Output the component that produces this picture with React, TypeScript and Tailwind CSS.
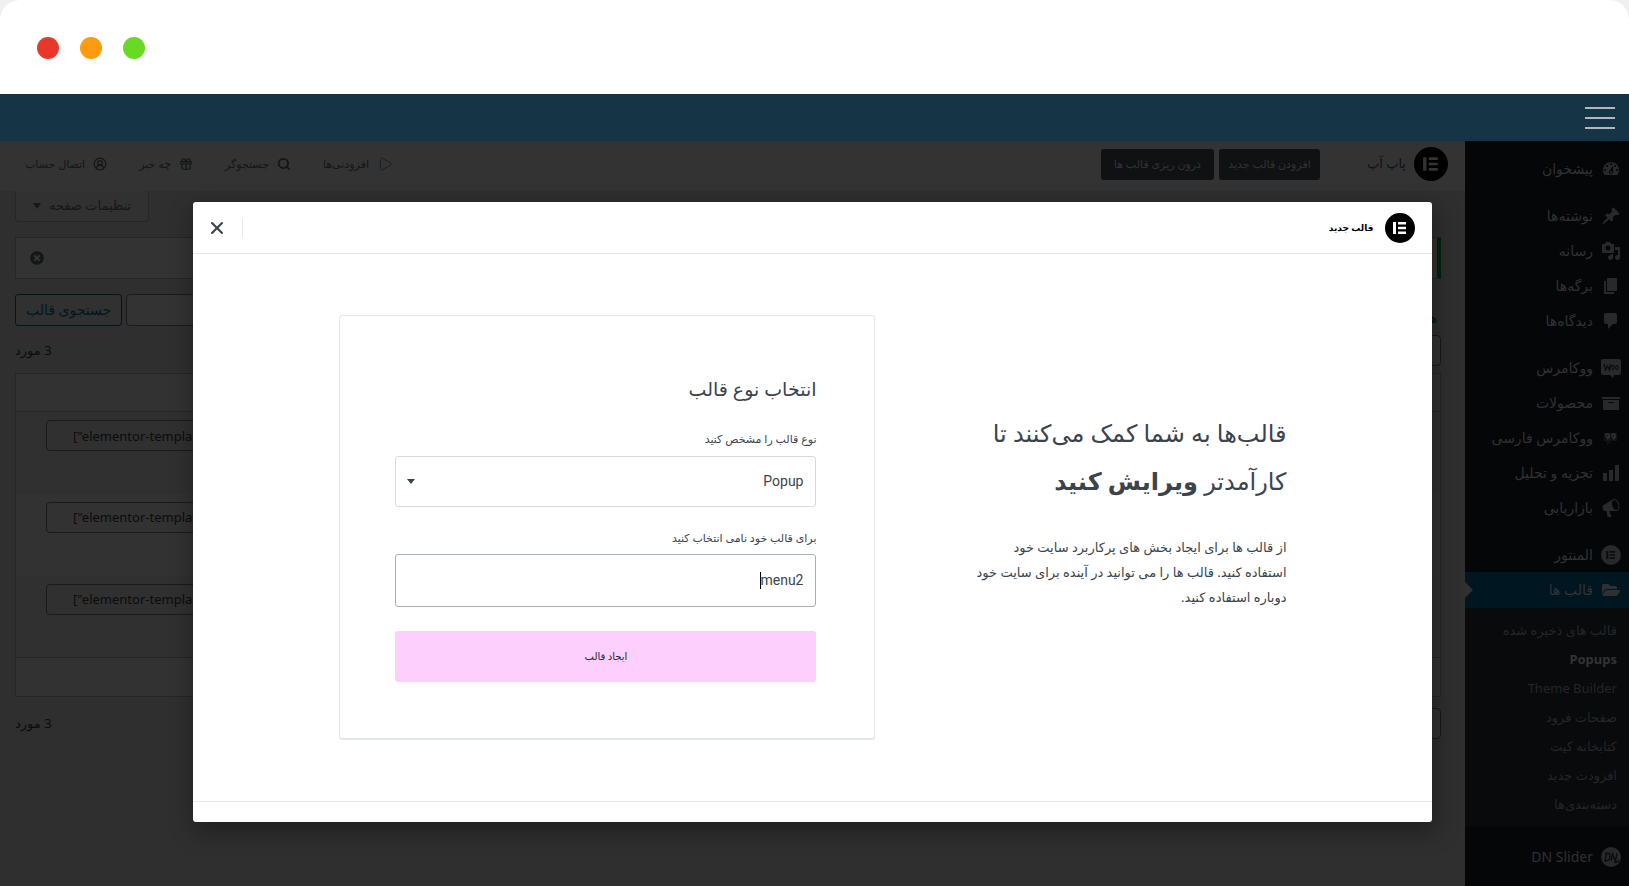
import { useState, type ReactNode } from 'react';
import { FaFolderOpen, FaTimesCircle } from 'react-icons/fa';
import { CircleUserRound, Gift, Search, Play, X } from 'lucide-react';

const ICONS = {
  dashboard:
    'M3.76 16h12.48c1.1-1.37 1.76-3.11 1.76-5 0-4.42-3.58-8-8-8s-8 3.58-8 8c0 1.89.66 3.63 1.76 5zM10 4c.55 0 1 .45 1 1s-.45 1-1 1-1-.45-1-1 .45-1 1-1zM6 6c.55 0 1 .45 1 1s-.45 1-1 1-1-.45-1-1 .45-1 1-1zm8 0c.55 0 1 .45 1 1s-.45 1-1 1-1-.45-1-1 .45-1 1-1zm-5.37 5.55L12 7v6c0 1.1-.9 2-2 2s-2-.9-2-2c0-.57.24-1.08.63-1.45zM4 10c.55 0 1 .45 1 1s-.45 1-1 1-1-.45-1-1 .45-1 1-1zm12 0c.55 0 1 .45 1 1s-.45 1-1 1-1-.45-1-1 .45-1 1-1zm-5 3c0-.55-.45-1-1-1s-1 .45-1 1 .45 1 1 1 1-.45 1-1z',
  post: 'M10.44 3.02l1.82-1.82 6.36 6.35-1.83 1.82c-1.05-.68-2.48-.57-3.41.36l-.75.75c-.92.93-1.04 2.35-.35 3.41l-1.83 1.82-2.41-2.41-2.8 2.79c-.42.42-3.38 2.71-3.8 2.29s1.86-3.39 2.28-3.81l2.79-2.79L4.1 9.36l1.83-1.82c1.05.69 2.48.57 3.4-.36l.75-.75c.93-.92 1.05-2.35.36-3.41z',
  media:
    'M13 11V4c0-.55-.45-1-1-1h-1.67L9 1H5L3.67 3H2c-.55 0-1 .45-1 1v7c0 .55.45 1 1 1h10c.55 0 1-.45 1-1zM7 4.5c1.38 0 2.5 1.12 2.5 2.5S8.38 9.5 7 9.5 4.5 8.38 4.5 7 5.62 4.5 7 4.5zM14 6h5v10.5c0 1.38-1.12 2.5-2.5 2.5S14 17.88 14 16.5s1.12-2.5 2.5-2.5c.17 0 .34.02.5.05V9h-3V6zm-4 8.05V13h2v3.5c0 1.38-1.12 2.5-2.5 2.5S7 17.88 7 16.5 8.12 14 9.5 14c.17 0 .34.02.5.05z',
  page: 'M6 15V2h10v13H6zm-1 1h8v2H3V5h2v11z',
  comments:
    'M5 2h9q.82 0 1.41.59T16 4v7q0 .82-.59 1.41T14 13h-2l-5 5v-5H5q-.82 0-1.41-.59T3 11V4q0-.82.59-1.41T5 2z',
  archive: 'M19 4v2H1V4h18zM2 7h16v10H2V7zm11 3V9H7v1h6z',
  chart: 'M18 18V2h-4v16h4zm-6 0V7H8v11h4zm-6 0v-8H2v8h4z',
  megaphone:
    'M18.15 5.94c.46 1.62.38 3.22-.02 4.48-.42 1.28-1.26 2.18-2.3 2.48-.16.06-.26.06-.4.06-.06.02-.12.02-.18.02-.06.02-.14.02-.22.02h-6.8l2.22 5.5c.02.14-.06.26-.14.34-.08.1-.24.16-.34.16H6.95c-.1 0-.26-.06-.34-.16-.08-.08-.16-.2-.14-.34l-1-5.5H4.25l-.02-.02c-.5.06-1.08-.18-1.54-.62s-.88-1.08-1.06-1.88c-.24-.8-.2-1.56-.02-2.2.18-.62.58-1.08 1.06-1.3l.02-.02 9-5.4c.1-.06.18-.1.24-.16.06-.04.14-.08.24-.12.16-.08.28-.12.5-.18 1.04-.3 2.24.1 3.22.98s1.84 2.24 2.26 3.86zm-2.58 5.98h-.02c.4-.1.74-.34 1.04-.7.58-.7.86-1.76.86-3.04 0-.64-.1-1.3-.28-1.98-.34-1.36-1.02-2.5-1.78-3.24s-1.68-1.1-2.46-.88c-.82.22-1.4.96-1.7 2-.32 1.04-.28 2.36.06 3.72.38 1.36 1 2.5 1.8 3.24.78.74 1.62 1.1 2.48.88z',
};

function DashIcon({ name }: { name: keyof typeof ICONS }) {
  return (
    <svg className="w-5 h-5" viewBox="0 0 20 20" fill="currentColor" fillRule="evenodd">
      <path d={ICONS[name]} />
    </svg>
  );
}

function ElementorLogo({ className, fg, bg }: { className: string; fg: string; bg: string }) {
  return (
    <svg className={className} viewBox="0 0 30 30">
      <circle cx="15" cy="15" r="15" fill={bg} />
      <path d="M8 9h3v12H8zM13 9h8v2.5h-8zM13 13.8h8v2.4h-8zM13 18.5h8V21h-8z" fill={fg} />
    </svg>
  );
}

function WooIcon() {
  return (
    <svg className="w-5 h-5" viewBox="0 0 20 20" fill="none">
      <path d="M2 1h16a2 2 0 0 1 2 2v12a2 2 0 0 1-2 2h-5l-1 3-3-3H2a2 2 0 0 1-2-2V3a2 2 0 0 1 2-2z" fill="#28292a" />
      <path d="M3 6l1.500 6L6.500 8l2 4L9.500 6" stroke="#0a0b0c" strokeWidth="1.300" />
      <ellipse cx="12" cy="9.500" rx="1.300" ry="2.200" stroke="#0a0b0c" />
      <ellipse cx="16" cy="9.500" rx="1.300" ry="2.200" stroke="#0a0b0c" />
    </svg>
  );
}

function QuoteIcon() {
  return (
    <svg className="w-5 h-5" viewBox="0 0 20 20" fill="none">
      <path d="M3 5h13v8h-6l-4 4v-4H3z" fill="#121314" />
      <g stroke="#303132" strokeWidth="1.400">
        <circle cx="6.500" cy="7.500" r="1.700" />
        <circle cx="12.500" cy="7.500" r="1.700" />
        <path d="M8.200 7.500c0 2-.7 3.200-2.200 3.700M14.200 7.500c0 2-.7 3.200-2.200 3.700" />
      </g>
    </svg>
  );
}

function SliderIcon() {
  return (
    <svg className="w-5 h-5" viewBox="0 0 20 20" fill="none">
      <circle cx="10" cy="10" r="10" fill="#28292a" />
      <path d="M5.500 6L4 14c3 0 5-2 5-5s-2-3-5-2.500M10 14l1.500-7 3 7L16 6.500M13 15c2 1 4 0 5-2" stroke="#0a0b0c" strokeWidth="1.300" />
    </svg>
  );
}

type MenuItem = { label: string; icon: ReactNode };

const MENU_GROUPS: MenuItem[][] = [
  [{ label: 'پیشخوان', icon: <DashIcon name="dashboard" /> }],
  [
    { label: 'نوشته‌ها', icon: <DashIcon name="post" /> },
    { label: 'رسانه', icon: <DashIcon name="media" /> },
    { label: 'برگه‌ها', icon: <DashIcon name="page" /> },
    { label: 'دیدگاه‌ها', icon: <DashIcon name="comments" /> },
  ],
  [
    { label: 'ووکامرس', icon: <WooIcon /> },
    { label: 'محصولات', icon: <DashIcon name="archive" /> },
    { label: 'ووکامرس فارسی', icon: <QuoteIcon /> },
    { label: 'تجزیه و تحلیل', icon: <DashIcon name="chart" /> },
    { label: 'بازاریابی', icon: <DashIcon name="megaphone" /> },
  ],
  [{ label: 'المنتور', icon: <ElementorLogo className="w-5 h-5" bg="#28292a" fg="#0a0b0c" /> }],
];

const SUBMENU = [
  'قالب های ذخیره شده',
  'Popups',
  'Theme Builder',
  'صفحات فرود',
  'کتابخانه کیت',
  'افزودت جدید',
  'دسته‌بندی‌ها',
];

const TOOLBAR = [
  { label: 'افزودنی‌ها', icon: <Play className="w-4 h-4 stroke-1" /> },
  { label: 'جستجوگر', icon: <Search className="w-3.5 h-3.5" strokeWidth={3} /> },
  { label: 'چه خبر', icon: <Gift className="w-3.5 h-3.5" /> },
  { label: 'اتصال حساب', icon: <CircleUserRound className="w-3.5 h-3.5" /> },
];

function SidebarLink({ label, icon }: MenuItem) {
  return (
    <a href="#" className="flex items-center gap-2 h-[35px] pr-2 whitespace-nowrap text-[#313233]">
      <span className="w-5 text-[#28292a]">{icon}</span>
      {label}
    </a>
  );
}

function Sidebar() {
  return (
    <nav className="w-[164px] shrink-0 bg-[#050608] pt-[10px] text-sm overflow-hidden">
      {MENU_GROUPS.map((group, i) => (
        <div key={i} className="mb-3">
          {group.map((item) => (
            <SidebarLink key={item.label} {...item} />
          ))}
        </div>
      ))}
      <a href="#" className="relative flex items-center gap-2 h-9 -mt-3 pr-2 bg-[#001722] text-[#333]">
        <FaFolderOpen className="w-5 h-4 text-[#2d3133]" />
        قالب ها
        <span className="absolute left-0 top-[10px] border-y-8 border-l-8 border-y-transparent border-l-[#303030]" />
      </a>
      <div className="bg-[#090a0b] py-2">
        {SUBMENU.map((label) => (
          <a
            key={label}
            href="#"
            className={`flex items-center h-[29px] pr-3 text-[13px] whitespace-nowrap ${
              label === 'Popups' ? 'font-bold text-[#333]' : 'text-[#242628]'
            }`}
          >
            {label}
          </a>
        ))}
      </div>
      <div className="pt-3">
        <SidebarLink label="DN Slider" icon={<SliderIcon />} />
      </div>
    </nav>
  );
}

function TemplatesPage() {
  const cell = 'border-y border-[#262626]';
  return (
    <main className="flex-1 min-w-0 bg-[#2f2f2f] text-[#0b0c0d]">
      <div className="flex items-center justify-between h-[50px] bg-[#333] pr-[17px] pl-[25px] pb-1">
        <div className="flex items-center">
          <ElementorLogo className="w-[34px] h-[34px]" bg="#000" fg="#333" />
          <span className="mr-2 ml-[47px] text-[13px] text-[#101214]">پاپ آپ</span>
          <button type="button" className="w-[101px] h-[31px] ml-[5px] rounded-[3px] bg-[#0f1113] text-[11px] text-[#333]">
            افزودن قالب جدید
          </button>
          <button type="button" className="w-[113px] h-[31px] rounded-[3px] bg-[#0f1113] text-[11px] text-[#333]">
            درون ریزی قالب ها
          </button>
        </div>
        <div className="flex items-center gap-8 text-[11px] text-[#131516]">
          {TOOLBAR.map(({ label, icon }) => (
            <a key={label} href="#" className="flex items-center gap-2">
              {icon}
              {label}
            </a>
          ))}
        </div>
      </div>

      <div className="pl-[15px] pr-6">
        <div className="flex justify-end">
          <button type="button" className="flex items-center justify-center gap-2 w-[134px] h-[31px] rounded-b border border-t-0 border-[#262626] bg-[#313131] text-[13px] text-[#161718]">
            تنظیمات صفحه
            <span className="border-x-4 border-t-[6px] border-x-transparent border-t-[#161718]" />
          </button>
        </div>
        <div className="flex items-center justify-end h-[42px] mt-[15px] pl-[14px] border border-r-4 border-[#262626] border-r-[#00240e] bg-[#333]">
          <FaTimesCircle className="w-[14px] h-[14px] text-[#151617]" />
        </div>
        <div className="flex items-center justify-between h-8 mt-[15px]">
          <a href="#" className="pt-4 pr-1 text-[13px] leading-4 text-[#001722]">همه</a>
          <div className="flex gap-1">
            <input aria-label="جستجو" className="w-[200px] h-8 rounded border border-[#191a1b] bg-[#333]" />
            <button type="button" className="w-[107px] h-8 rounded-[3px] border border-[#001722] bg-[#313131] text-sm text-[#001722]">
              جستجوی قالب
            </button>
          </div>
        </div>
        <div className="flex items-center justify-between mt-[9px] mb-[7px]">
          <select aria-label="کارهای دسته‌جمعی" className="appearance-none w-[120px] h-[31px] rounded border border-[#191a1b] bg-[#333]" />
          <span className="text-[13px]">3 مورد</span>
        </div>
        <table className="w-full border border-[#262626] bg-[#323232]">
          <thead>
            <tr className="h-[38px]"><th className={cell} /></tr>
          </thead>
          <tbody>
            {[0, 1, 2].map((row) => (
              <tr key={row} className="h-[82px] odd:bg-[#303030]">
                <td className="pl-[30px] pt-2 align-top">
                  <input
                    dir="ltr"
                    readOnly
                    aria-label="کد کوتاه"
                    value={'["elementor-template'}
                    className="block mr-auto w-[200px] h-[31px] pl-[26px] rounded border border-[#191a1b] bg-transparent text-[13px]"
                  />
                </td>
              </tr>
            ))}
          </tbody>
          <tfoot>
            <tr className="h-[39px]"><td className={cell} /></tr>
          </tfoot>
        </table>
        <div className="flex items-center justify-between mt-[11px]">
          <select aria-label="کارهای دسته‌جمعی پایین" className="appearance-none w-[120px] h-[31px] rounded border border-[#191a1b] bg-[#333]" />
          <span className="text-[13px]">3 مورد</span>
        </div>
      </div>
    </main>
  );
}

function NewTemplateDialog() {
  const [type, setType] = useState('Popup');
  const [name, setName] = useState('menu2');

  return (
    <div role="dialog" aria-labelledby="dialog-title" className="w-[76%] mr-1 rounded-[3px] bg-white text-[#3b444c] shadow-[2px_8px_23px_3px_rgba(0,0,0,0.3)]">
      <header className="flex items-center justify-between h-[52px] pr-[17px] pl-[14px] border-b border-[#e6e9ec]">
        <div className="flex items-center gap-[11px]">
          <ElementorLogo className="w-[30px] h-[30px]" bg="#000" fg="#fff" />
          <h2 id="dialog-title" className="text-[9px] font-bold text-black">قالب جدید</h2>
        </div>
        <div className="flex items-center gap-[15px]">
          <span className="w-px h-[18px] bg-[#e6e9ec]" />
          <button type="button" aria-label="بستن">
            <X className="w-5 h-5" strokeWidth={2.5} />
          </button>
        </div>
      </header>

      <div className="flex items-center justify-between pr-[145px] pl-[146px] py-[61px]">
        <div className="w-[320px] pb-9">
          <h3 className="text-2xl leading-[48px]">
            قالب‌ها به شما کمک می‌کنند تا
            <br />
            کارآمدتر <strong className="font-semibold">ویرایش کنید</strong>
          </h3>
          <p className="mt-[30px] text-[13px] leading-[25px]">
            از قالب ها برای ایجاد بخش های پرکاربرد سایت خود
            <br />
            استفاده کنید. قالب ها را می توانید در آینده برای سایت خود دوباره استفاده کنید.
          </p>
        </div>

        <form
          onSubmit={(e) => e.preventDefault()}
          className="w-[536px] h-[425px] pr-[58px] pl-[55px] pt-[57px] rounded-[3px] border border-b-2 border-[#e3e7ea]"
        >
          <h4 className="text-[19px] leading-8">انتخاب نوع قالب</h4>
          <label htmlFor="template-type" className="block mt-[25px] mb-2 text-[11px] leading-[18px]">
            نوع قالب را مشخص کنید
          </label>
          <div className="relative">
            <select
              id="template-type"
              value={type}
              onChange={(e) => setType(e.target.value)}
              className="appearance-none w-full h-[51px] px-3 pb-0.5 rounded-[3px] border border-[#d5dadf] bg-white font-[Roboto] text-sm"
            >
              <option>Popup</option>
            </select>
            <span className="absolute left-3 top-[23px] border-x-4 border-t-[5px] border-x-transparent border-t-[#3b444c]" />
          </div>
          <label htmlFor="template-name" className="block mt-[22px] mb-[7px] text-[11px] leading-[18px]">
            برای قالب خود نامی انتخاب کنید
          </label>
          <div className="relative">
            <input
              id="template-name"
              value={name}
              onChange={(e) => setName(e.target.value)}
              className="w-full h-[53px] px-3 pb-0.5 rounded-[3px] border border-[#a4afb7] font-[Roboto] text-sm outline-none"
            />
            <span className="absolute right-[55px] top-[18px] w-px h-[17px] bg-black" />
          </div>
          <button type="submit" className="w-full h-[51px] mt-6 rounded-[3px] bg-[#fccffc] text-[10px] text-[#23282d]">
            ایجاد قالب
          </button>
        </form>
      </div>
      <footer className="h-[21px] border-t border-[#e6e9ec]" />
    </div>
  );
}

export default function App() {
  return (
    <div className="h-screen bg-[#f0f0f0] font-['Noto_Sans','DejaVu_Sans',sans-serif]">
      <div className="flex flex-col h-full rounded-t-[20px] overflow-hidden bg-white">
        <div className="flex items-center gap-[21px] h-[94px] shrink-0 pl-[37px] pt-[2px]">
          <span className="w-[22px] h-[22px] rounded-full bg-[#e93829]" />
          <span className="w-[22px] h-[22px] rounded-full bg-[#ff9b10]" />
          <span className="w-[22px] h-[22px] rounded-full bg-[#68da23]" />
        </div>

        <div dir="rtl" className="relative flex flex-col flex-1 min-h-0">
          <div className="flex items-center h-[47px] shrink-0 px-[14px] bg-[#153445]">
            <button type="button" aria-label="منو" className="flex flex-col gap-2 w-[30px]">
              <span className="w-full h-0.5 bg-[#b4b7ba]" />
              <span className="w-full h-0.5 bg-[#b4b7ba]" />
              <span className="w-full h-0.5 bg-[#b4b7ba]" />
            </button>
          </div>
          <div className="flex flex-1 min-h-0">
            <Sidebar />
            <TemplatesPage />
          </div>
          <div className="absolute inset-0 flex justify-center items-start pt-[108px]">
            <NewTemplateDialog />
          </div>
        </div>
      </div>
    </div>
  );
}
